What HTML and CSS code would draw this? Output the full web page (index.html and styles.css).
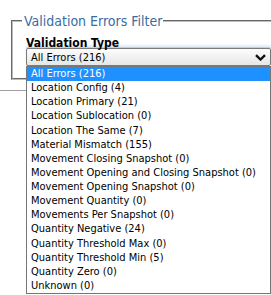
FILE: index.html
```html
<!DOCTYPE html>
<html lang="en">
<head>
    <meta charset="UTF-8">
    <meta name="viewport" content="width=device-width, initial-scale=1.0">
    <title>Validation Errors Filter</title>
    <link rel="stylesheet" href="styles.css">
</head>
<body>
    <div class="filter">
        <div class="filter-title">Validation Errors Filter</div>

        <div class="field">
            <label class="field-label">Validation Type</label>
            <div class="select">
                <span class="select-value">All Errors (216)</span>
                <svg class="select-arrow" width="11" height="7" viewBox="0 0 11 7">
                    <polyline points="1,1.2 5.5,5.5 10,1.2" fill="none" stroke="#111" stroke-width="2.4"/>
                </svg>
            </div>

            <!-- open dropdown list -->
            <ul class="options">
                <li class="option selected">All Errors (216)</li>
                <li class="option">Location Config (4)</li>
                <li class="option">Location Primary (21)</li>
                <li class="option">Location Sublocation (0)</li>
                <li class="option">Location The Same (7)</li>
                <li class="option">Material Mismatch (155)</li>
                <li class="option">Movement Closing Snapshot (0)</li>
                <li class="option">Movement Opening and Closing Snapshot (0)</li>
                <li class="option">Movement Opening Snapshot (0)</li>
                <li class="option">Movement Quantity (0)</li>
                <li class="option">Movements Per Snapshot (0)</li>
                <li class="option">Quantity Negative (24)</li>
                <li class="option">Quantity Threshold Max (0)</li>
                <li class="option">Quantity Threshold Min (5)</li>
                <li class="option">Quantity Zero (0)</li>
                <li class="option">Unknown (0)</li>
            </ul>
        </div>
    </div>

    <div class="divider"></div>
</body>
</html>
```

FILE: styles.css
```css
body {
    margin: 0;
    min-height: 100vh;
    background-color: #fff;
    font-family: "DejaVu Sans Condensed", "DejaVu Sans", Verdana, sans-serif;
    font-stretch: condensed;
    font-size: 11px;
    color: #000;
}
.filter {
    margin: 20px 0 0 11px;
    padding: 0 0 12px 13px;
    border: 2px groove #bcbcbc;
    border-right: 0;
}
.filter-title {
    display: table;
    margin: -9px 0 0 -4px;
    padding: 0 1px 0 2px;
    background-color: #fff;
    color: #3a6ca4;
    font-size: 14px;
    line-height: 16px;
}
.field {
    position: relative;
    margin-top: 10px;
}
.field-label {
    display: block;
    font-size: 12px;
    font-weight: bold;
    line-height: 9px;
}
.select {
    display: flex;
    align-items: center;
    justify-content: space-between;
    box-sizing: border-box;
    width: 245px;
    height: 18px;
    padding: 0 4px;
    border: 1px solid #7a7a7a;
    border-radius: 2px;
    background: linear-gradient(#fdfdfd, #e6e6e6);
    box-shadow: 0 -1px 0 #b9d0f0, 0 -3px 2px #e3ecf9;
}
.select-arrow {
    display: block;
    margin-top: 1px;
}
.options {
    position: absolute;
    top: 27px;
    left: 0;
    width: 245px;
    box-sizing: border-box;
    margin: 0;
    padding: 0;
    list-style: none;
    background-color: #fff;
    border: 1px solid #767676;
    z-index: 2;
}
.option {
    height: 14.125px;
    line-height: 14px;
    padding-left: 4px;
    white-space: nowrap;
}
.option.selected {
    background-color: #1e90ff;
    color: #fff;
}
.divider {
    margin-top: 10px;
    height: 1px;
    background-color: #a0a0a0;
}
```
